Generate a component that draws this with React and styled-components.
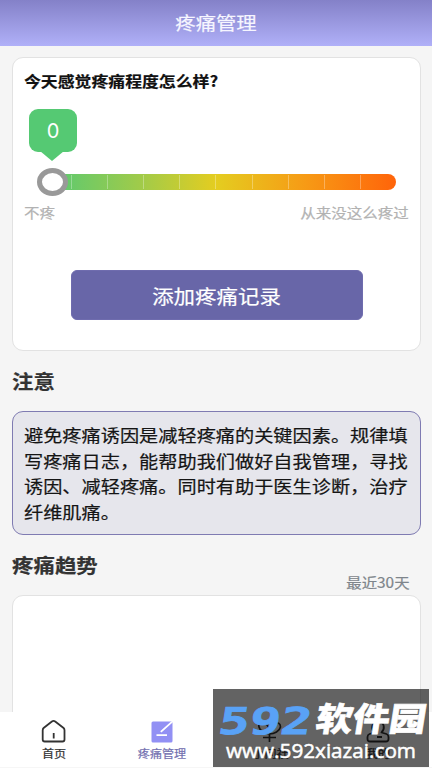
import styled, { createGlobalStyle } from "styled-components";

const GlobalStyle = createGlobalStyle`
  * {
    box-sizing: border-box;
  }
  body {
    margin: 0;
    background: #f5f5f5;
    font-family: "Noto Sans CJK SC", sans-serif;
    overflow: hidden;
  }
`;

const Page = styled.div`
  position: relative;
  width: 432px;
  height: 768px;
  display: flex;
  flex-direction: column;
  overflow: hidden;
  background: #f5f5f5;
`;

// wide lettering used all over the app
const Wide = styled.span`
  display: block;
  white-space: nowrap;
  transform: scaleX(${(p) => p.$x || 1.1});
  transform-origin: ${(p) => p.$from || "left"} center;
  -webkit-text-stroke: 0.2px currentColor;
`;

const Header = styled.header`
  height: 46px;
  flex: none;
  display: flex;
  align-items: center;
  justify-content: center;
  padding-bottom: 2px;
  background: linear-gradient(#8481c8, #b0b0f8);
  color: #f6f6ff;
  font-size: 18.5px;
  line-height: 28px;
`;

const Content = styled.main`
  flex: 1;
  min-height: 0;
  overflow: hidden;
  display: flex;
  flex-direction: column;
  padding: 11px 11px 0 12px;
`;

const Card = styled.section`
  flex: none;
  height: ${(p) => p.$height}px;
  background: #fff;
  border: 1px solid #e2e2e2;
  border-radius: 11px;
  padding: 11px 11px 0;
`;

const Question = styled.div`
  height: 26px;
  line-height: 22px;
  font-size: 15.2px;
  font-weight: 700;
  color: #111;
`;

const Slider = styled.div`
  display: flex;
  flex-direction: column;
  margin: 14px 12px 0 12px;
`;

const Bubble = styled.div`
  position: relative;
  width: 48px;
  height: 43px;
  margin-left: -7px;
  border-radius: 9px;
  background: #55c973;
  color: #fff;
  display: flex;
  align-items: center;
  justify-content: center;
  font-family: Inter, sans-serif;
  font-size: 20px;
  padding-top: 1px;

  &::after {
    content: "";
    position: absolute;
    left: 11px;
    top: 42px;
    border: 12px solid transparent;
    border-top: 10px solid #55c973;
    border-bottom: 0;
  }
`;

const Track = styled.div`
  position: relative;
  width: 360px;
  height: 16px;
  margin-top: 22px;
  border-radius: 8px;
  display: flex;
  background: linear-gradient(90deg, transparent 10px, #55c974 10px, #a3cb48 30%, #e4cd20 50%, #f79a15 75%, #ff640a);
`;

const Step = styled.div`
  flex: 1;
  margin: 1px 0;
  border-right: 1px solid rgba(255, 255, 255, 0.3);

  &:last-of-type {
    border-right: none;
  }
`;

const Thumb = styled.span`
  position: absolute;
  left: 1px;
  top: -6px;
  width: 31px;
  height: 28px;
  border: 5.5px solid #999;
  border-radius: 50%;
  background: #fff;
`;

const Ends = styled.div`
  display: flex;
  justify-content: space-between;
  margin-top: 10px;
  height: 25px;
  line-height: 24px;
  font-size: 14.1px;
  color: #b2b2b2;
`;

const AddButton = styled.button`
  display: flex;
  align-items: center;
  justify-content: center;
  width: 292px;
  height: 50px;
  margin: 45px 0 0 47px;
  padding: 0;
  border: 1px solid #6f6cae;
  border-radius: 6px;
  background: #6866a8;
  color: #fff;
  font-family: inherit;
  font-size: 19.5px;
`;

const Row = styled.div`
  flex: none;
  height: ${(p) => p.$height}px;
  display: flex;
  justify-content: space-between;
`;

const Heading = styled.h2`
  margin: ${(p) => p.$top}px 0 0;
  font-size: 19.5px;
  line-height: 28px;
  font-weight: 700;
  color: #333;
`;

const Range = styled.div`
  margin: 36px 11px 0 0;
  font-size: 14px;
  line-height: 22px;
  color: #7e858b;
`;

const Notice = styled.section`
  flex: none;
  height: 124px;
  border: 1px solid #7f7bb2;
  border-radius: 11px;
  background: #e6e6ec;
  padding: 10px 11px;
  font-size: 17.45px;
  line-height: 25.6px;
  color: #151515;
`;

const TabBar = styled.nav`
  flex: none;
  height: 56px;
  display: grid;
  grid-template-columns: repeat(4, 1fr);
  background: #fff;
  border-bottom: 1px solid #f6f6f6;
`;

const Tab = styled.div`
  display: flex;
  flex-direction: column;
  align-items: center;
  padding-top: 7px;
  font-size: 11px;
  line-height: 16px;
  color: ${(p) => (p.$active ? "#7370b0" : "#333")};

  svg {
    flex: none;
    margin-bottom: 2px;
  }
`;

const Watermark = styled.div`
  position: absolute;
  left: 213px;
  top: 689px;
  width: 216px;
  height: 78px;
  background: rgba(0, 0, 0, 0.61);
`;

const HomeIcon = () => (
  <svg width="26" height="24" viewBox="0 0 26 24" fill="none" stroke="#333" strokeWidth="1.8" strokeLinejoin="round">
    <path d="M10.900 2.500 2.600 9Q1.700 9.800 1.700 11.200V20.500q0 2 2 2h17.800q2 0 2-2V11.200Q23.500 9.800 22.600 9L14.200 2.500Q12.500 1.300 10.900 2.500Z" />
    <path d="M12.700 14v5.500" />
  </svg>
);

const PainIcon = () => (
  <svg width="26" height="24" viewBox="0 0 26 24" fill="none">
    <rect x="2.500" y="2.500" width="21" height="21" rx="1.500" fill="#9290f4" />
    <path d="m11.800 12.800 11.200-10M7.500 16.200h10.500" stroke="#fff" strokeWidth="1.800" />
  </svg>
);

const FlowerIcon = () => (
  <svg width="26" height="24" viewBox="0 0 26 24" fill="none" stroke="#333" strokeWidth="1.7">
    <path d="M12.500 15C7 14 3 12 2 8 1 4 4 3 7 4c4 1 6 6 5.500 11ZM12.500 15c5 0 10-3 11-7 0-4-3-5-6-3.500-4 2-5 6-5 10.500Zm0 0v8M6 18.500h13" />
  </svg>
);

const UserIcon = () => (
  <svg width="26" height="24" viewBox="0 0 26 24" fill="none" stroke="#333" strokeWidth="1.8" strokeLinejoin="round">
    <path d="M9.500 13.500C6 10 6 3 13 3s7 7 3.500 10.500l5 1.500q2 .7 2 3v2q0 2.500-2.500 2.500H5q-2.500 0-2.500-2.500v-2q0-2.300 2-3ZM12 18h5" />
  </svg>
);

const tabs = [
  { text: "首页", icon: <HomeIcon /> },
  { text: "疼痛管理", icon: <PainIcon />, active: true },
  { text: "小问社", icon: <FlowerIcon /> },
  { text: "我的", icon: <UserIcon /> },
];

const notice = [
  "避免疼痛诱因是减轻疼痛的关键因素。规律填",
  "写疼痛日志，能帮助我们做好自我管理，寻找",
  "诱因、减轻疼痛。同时有助于医生诊断，治疗",
  "纤维肌痛。",
];

const SiteMark = () => (
  <Watermark>
    <svg width="216" height="78" viewBox="0 0 216 78">
      <g transform="translate(4 45) skewX(-9)">
        <text x="0" y="-0.5" textLength="93" lengthAdjust="spacingAndGlyphs" fontFamily="DejaVu Sans Mono" fontWeight="700" fontSize="37" fill="#59a2f6" stroke="#59a2f6" strokeWidth="0.8">592</text>
        <text x="97" y="-3" textLength="110" lengthAdjust="spacingAndGlyphs" fontFamily="Noto Sans CJK SC" fontWeight="900" fontSize="33" fill="#fff" stroke="#fff" strokeWidth="0.6">软件园</text>
      </g>
      <text x="13" y="69" textLength="190" lengthAdjust="spacingAndGlyphs" fontFamily="Open Sans" fontSize="20.5" fill="#fff" stroke="#fff" strokeWidth="0.5">www.592xiazai.com</text>
    </svg>
  </Watermark>
);

const App = () => {
  return (
    <Page>
      <GlobalStyle />
      <Header>
        <Wide $from="center">疼痛管理</Wide>
      </Header>
      <Content>
        <Card $height={294}>
          <Question>
            <Wide $x={1.11}>今天感觉疼痛程度怎么样?</Wide>
          </Question>
          <Slider>
            <Bubble>0</Bubble>
            <Track>
              {Array.from({ length: 10 }, (_, i) => (
                <Step key={i} />
              ))}
              <Thumb />
            </Track>
          </Slider>
          <Ends>
            <Wide>不疼</Wide>
            <Wide $from="right">从来没这么疼过</Wide>
          </Ends>
          <AddButton>
            <Wide $from="center">添加疼痛记录</Wide>
          </AddButton>
        </Card>
        <Row $height={60}>
          <Heading $top={16}>
            <Wide>注意</Wide>
          </Heading>
        </Row>
        <Notice>
          {notice.map((line) => (
            <Wide key={line}>{line}</Wide>
          ))}
        </Notice>
        <Row $height={60}>
          <Heading $top={16}>
            <Wide>疼痛趋势</Wide>
          </Heading>
          <Range>
            <Wide $from="right">最近30天</Wide>
          </Range>
        </Row>
        <Card $height={240} />
      </Content>
      <TabBar>
        {tabs.map((tab) => (
          <Tab key={tab.text} $active={tab.active}>
            {tab.icon}
            <Wide $from="center">{tab.text}</Wide>
          </Tab>
        ))}
      </TabBar>
      <SiteMark />
    </Page>
  );
};

export default App;
